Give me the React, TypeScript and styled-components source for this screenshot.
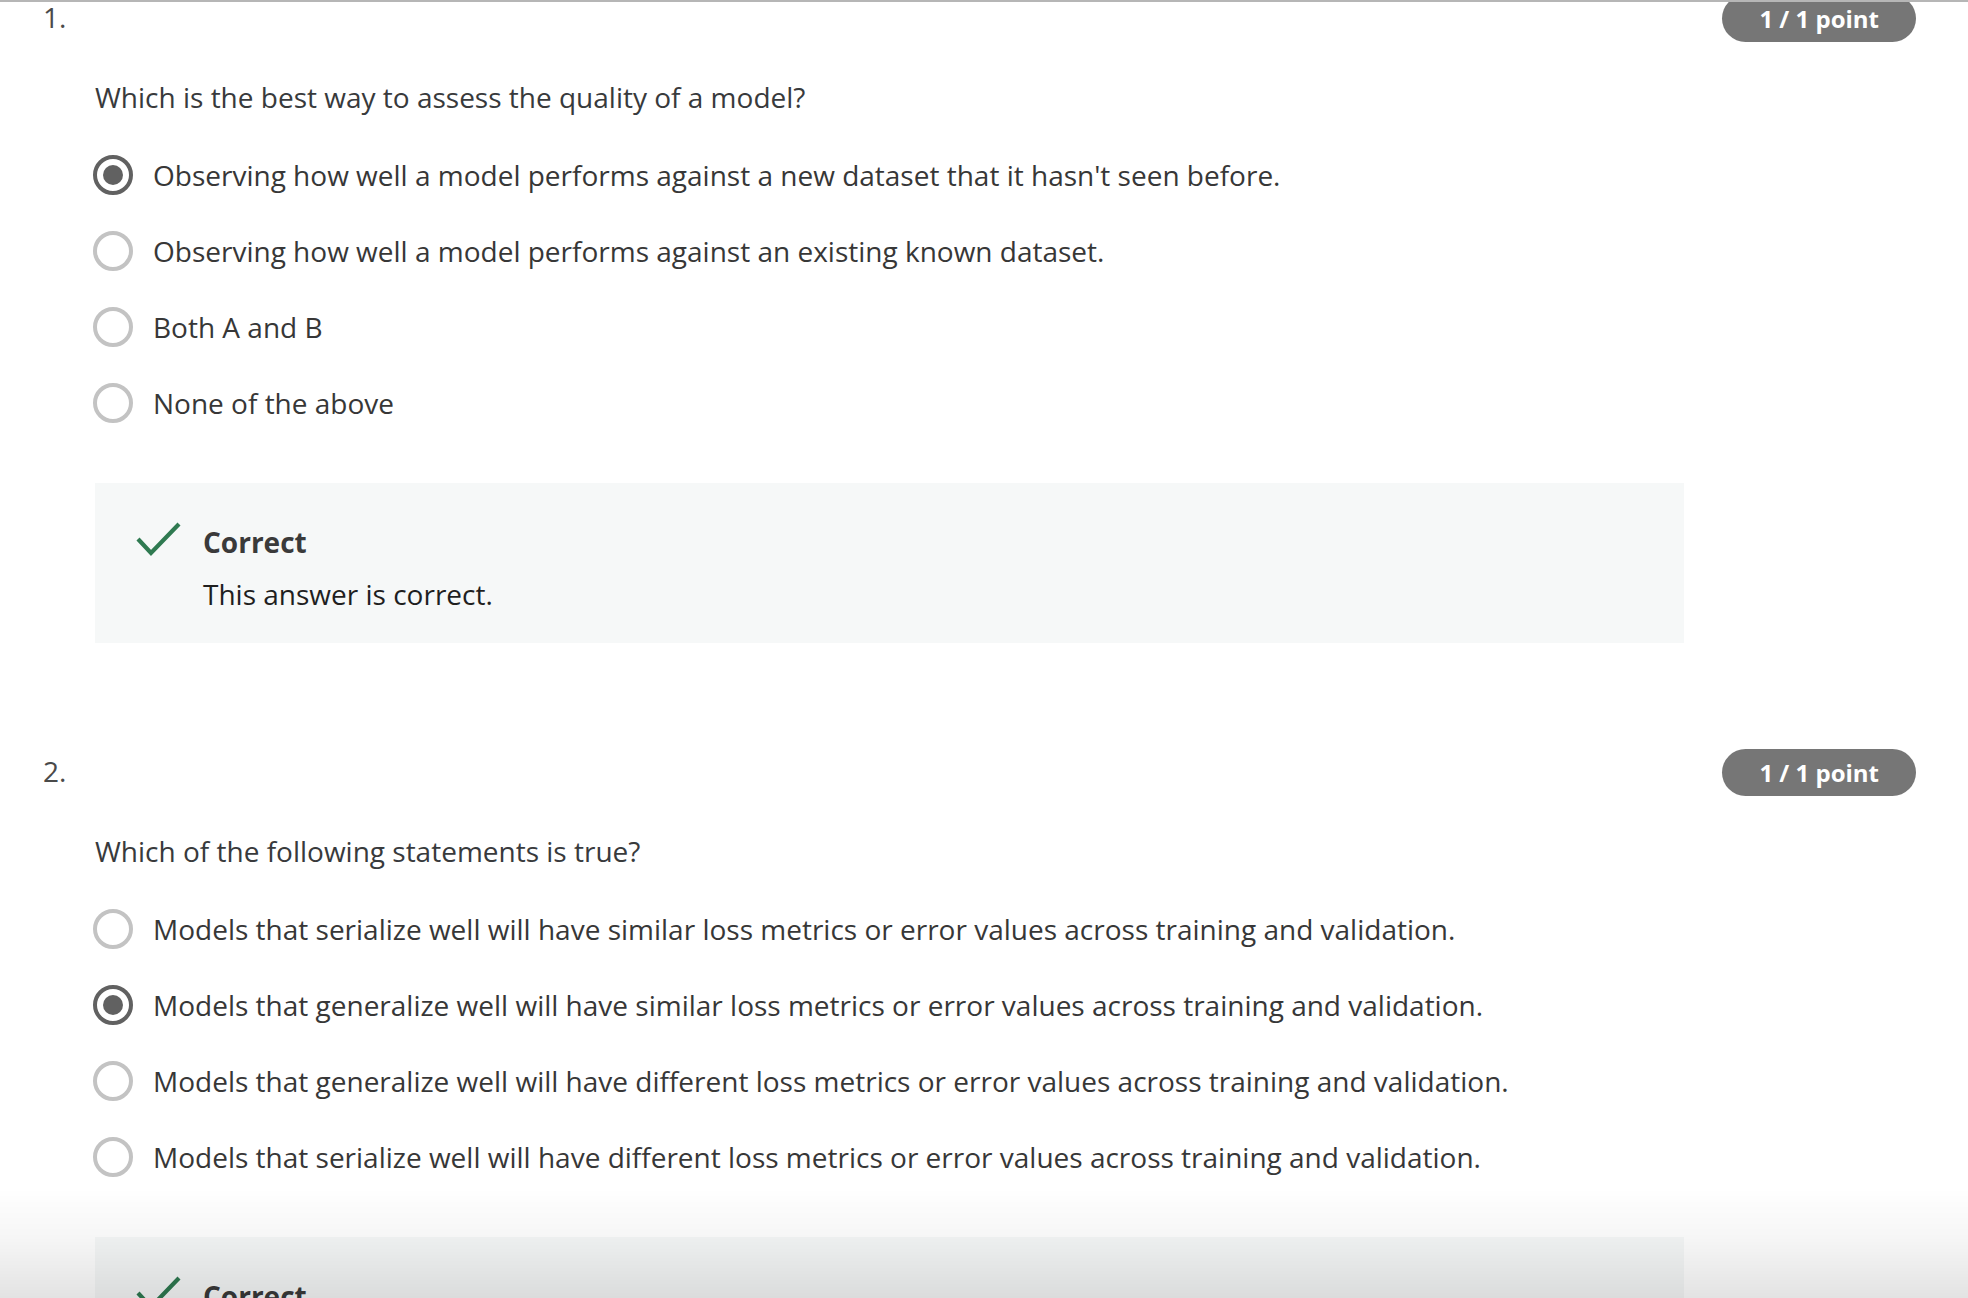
import React from "react";
import styled, { createGlobalStyle } from "styled-components";

const Global = createGlobalStyle`
  html, body { margin: 0; padding: 0; background: #ffffff; }
  body { height: 100vh; overflow: hidden; font-family: "Open Sans", "Noto Sans", sans-serif; }
`;

const Page = styled.div`
  height: 100vh;
  display: flex;
  flex-direction: column;
`;

const TopRule = styled.div`
  height: 2px;
  flex: none;
  background: #b6b6b6;
`;

const Viewport = styled.div`
  flex: 1;
  overflow: hidden;
`;

const Content = styled.div`
  margin-top: -7px;
`;

const Block = styled.section`
  padding-bottom: 106px;
`;

const Header = styled.div`
  height: 47px;
  display: flex;
  align-items: center;
  justify-content: space-between;
  padding: 0 52px 0 43px;
`;

const Number = styled.div`
  font-size: 28px;
  line-height: 30px;
  color: #4a4a4a;
  padding-bottom: 4px;
`;

const Badge = styled.div`
  height: 47px;
  padding: 0 37px;
  border-radius: 24px;
  background: #767676;
  color: #ffffff;
  font-size: 24px;
  font-weight: 700;
  display: flex;
  align-items: center;
  white-space: nowrap;
`;

const Body = styled.div`
  padding: 0 284px 0 95px;
`;

const Prompt = styled.div`
  margin-top: 35px;
  font-size: 28px;
  line-height: 40px;
  color: #383a3c;
`;

const Options = styled.div`
  margin-top: 38px;
  display: flex;
  flex-direction: column;
  gap: 36px;
`;

const Option = styled.label`
  height: 40px;
  display: flex;
  align-items: center;
  gap: 20px;
  margin-left: -2px;
`;

const Radio = styled.span<{ $checked?: boolean }>`
  width: 40px;
  height: 40px;
  box-sizing: border-box;
  border-radius: 50%;
  border: ${(p) => (p.$checked ? "4.5px solid #616161" : "4px solid #c3c3c3")};
  display: flex;
  align-items: center;
  justify-content: center;
  flex: none;
  &::after {
    content: "";
    display: ${(p) => (p.$checked ? "block" : "none")};
    width: 20px;
    height: 20px;
    border-radius: 50%;
    background: #616161;
  }
`;

const OptionText = styled.span`
  font-size: 28px;
  line-height: 40px;
  color: #373737;
  white-space: nowrap;
`;

const Feedback = styled.div`
  margin-top: 60px;
  height: 160px;
  box-sizing: border-box;
  background: #f6f8f8;
  padding: 39px 0 0 41px;
  display: flex;
  gap: 21px;
  align-items: flex-start;
`;

const CheckIcon = styled.svg`
  flex: none;
  margin-top: -1px;
`;

const FeedbackText = styled.div`
  display: flex;
  flex-direction: column;
  gap: 12px;
`;

const FeedbackTitle = styled.div`
  font-size: 28px;
  font-weight: 700;
  line-height: 40px;
  color: #3a3a3a;
`;

const FeedbackBody = styled.div`
  font-size: 28px;
  line-height: 40px;
  color: #1f1f1f;
`;

const BottomFade = styled.div`
  position: fixed;
  left: 0;
  right: 0;
  bottom: 0;
  height: 110px;
  pointer-events: none;
  background: linear-gradient(to bottom, rgba(0, 0, 0, 0) 0%, rgba(0, 0, 0, 0.035) 45%, rgba(0, 0, 0, 0.11) 100%);
`;

type Q = { n: number; prompt: string; options: string[]; selected: number };

const questions: Q[] = [
  {
    n: 1,
    prompt: "Which is the best way to assess the quality of a model?",
    options: [
      "Observing how well a model performs against a new dataset that it hasn't seen before.",
      "Observing how well a model performs against an existing known dataset.",
      "Both A and B",
      "None of the above",
    ],
    selected: 0,
  },
  {
    n: 2,
    prompt: "Which of the following statements is true?",
    options: [
      "Models that serialize well will have similar loss metrics or error values across training and validation.",
      "Models that generalize well will have similar loss metrics or error values across training and validation.",
      "Models that generalize well will have different loss metrics or error values across training and validation.",
      "Models that serialize well will have different loss metrics or error values across training and validation.",
    ],
    selected: 1,
  },
];

const Check = () => (
  <CheckIcon width="46" height="36" viewBox="0 0 46 36">
    <polyline points="2,18 15,32 43,3" fill="none" stroke="#2f7a51" strokeWidth="4.2" />
  </CheckIcon>
);

export default function App() {
  return (
    <Page>
      <Global />
      <TopRule />
      <Viewport>
        <Content>
          {questions.map((q) => (
            <Block key={q.n}>
              <Header>
                <Number>{q.n}.</Number>
                <Badge>1 / 1 point</Badge>
              </Header>
              <Body>
                <Prompt>{q.prompt}</Prompt>
                <Options>
                  {q.options.map((o, i) => (
                    <Option key={i}>
                      <Radio $checked={i === q.selected} />
                      <OptionText>{o}</OptionText>
                    </Option>
                  ))}
                </Options>
                <Feedback>
                  <Check />
                  <FeedbackText>
                    <FeedbackTitle>Correct</FeedbackTitle>
                    <FeedbackBody>This answer is correct.</FeedbackBody>
                  </FeedbackText>
                </Feedback>
              </Body>
            </Block>
          ))}
        </Content>
      </Viewport>
      <BottomFade />
    </Page>
  );
}
